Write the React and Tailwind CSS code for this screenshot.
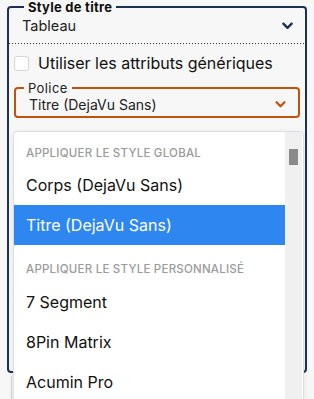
import React from 'react';

const Chevron = ({ className }) => (
    <svg className={className} viewBox="0 0 12 8" fill="none" stroke="currentColor" strokeWidth="2.6" strokeLinecap="round" strokeLinejoin="round">
        <path d="M1.5 1.5L6 6l4.5-4.5" />
    </svg>
);

const GroupHeader = ({ children, className = '' }) => (
    <div className={`flex items-end px-3 text-[11.5px] font-medium uppercase tracking-[0.02em] text-[#9b9b9b] ${className}`}>
        {children}
    </div>
);

const Option = ({ children, selected }) => (
    <div className={`flex h-10 items-center px-3 text-base ${selected ? 'bg-[#2e87f0] text-white' : 'text-[#111]'}`}>
        {children}
    </div>
);

export default function App() {
    return (
        <div className="relative h-[399px] w-[314px] overflow-hidden bg-[#f7f7f7] font-['Inter',sans-serif]">
            {/* Style de titre */}
            <fieldset className="mx-[7px] h-[373px] min-w-0 rounded-[4px] border-2 border-[#1b3350]">
                <legend className="ml-[15px] px-[4px] text-[13px] font-bold leading-[14px] tracking-[0.02em] text-[#111]">
                    Style de titre
                </legend>
                <div className="flex h-[29px] items-center justify-between pb-[5px] pl-[13px] pr-[12px]">
                    <span className="text-[14.5px] text-[#222]">Tableau</span>
                    <Chevron className="h-[8px] w-[11px] text-[#1b3350]" />
                </div>
                <div className="h-px bg-[linear-gradient(to_right,#333_1px,transparent_1px)] bg-[length:3px_1px]" />

                <label className="mt-[7px] flex h-6 items-center gap-[9px] pl-[5px]">
                    <span className="h-[15px] w-[15px] rounded-[3px] border border-[#d4d4d4] bg-white" />
                    <span className="text-base text-[#111]">Utiliser les attributs génériques</span>
                </label>

                {/* Police */}
                <fieldset className="mx-[5px] mt-[6px] h-[37px] min-w-0 rounded-[4px] border-2 border-[#c0510e]">
                    <legend className="ml-[8px] px-[4px] text-[13px] leading-[14px] tracking-[0.03em] text-[#222]">
                        Police
                    </legend>
                    <div className="flex h-[21px] items-center justify-between pb-[3px] pl-[13px] pr-[12px]">
                        <span className="text-[14px] text-[#222]">Titre (DejaVu Sans)</span>
                        <Chevron className="h-[7px] w-[11px] text-[#c0510e]" />
                    </div>
                </fieldset>
            </fieldset>
            <div className="ml-[11px] mt-[3px] h-[30px] border-l border-[#d0d0d0]" />

            {/* dropdown menu */}
            <div className="absolute left-[13px] top-[131px] flex h-[290px] w-[291px] overflow-hidden rounded-[4px] border border-[#dedede] bg-white shadow-[0_2px_6px_rgba(0,0,0,0.08)]">
                <div className="w-[271px]">
                    <GroupHeader className="h-[33px] pb-[3px]">Appliquer le style global</GroupHeader>
                    <Option>Corps (DejaVu Sans)</Option>
                    <Option selected>Titre (DejaVu Sans)</Option>
                    <GroupHeader className="h-[37px] pb-[4px]">Appliquer le style personnalisé</GroupHeader>
                    <Option>7 Segment</Option>
                    <Option>8Pin Matrix</Option>
                    <Option>Acumin Pro</Option>
                </div>
                <div className="w-[17px] bg-[#f0f0f0] pl-[4px] pt-[17px]">
                    <div className="h-[16px] w-[9px] bg-[#8a8a8a]" />
                </div>
            </div>
        </div>
    );
}
